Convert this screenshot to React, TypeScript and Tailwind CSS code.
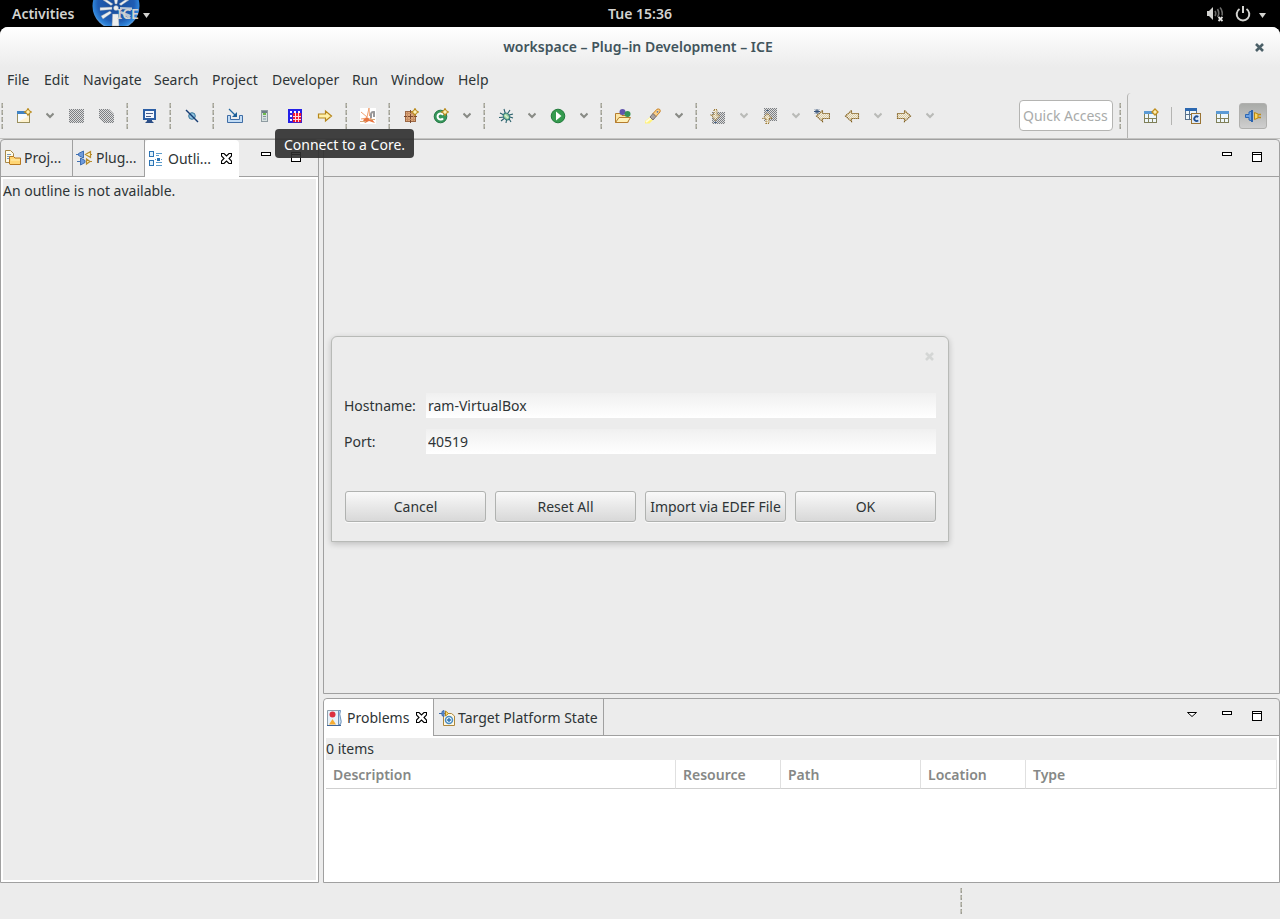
import React from 'react';

type IconProps = { children: React.ReactNode; crisp?: boolean };

function Icon({ children, crisp }: IconProps) {
    return (
        <svg className="h-4 w-4 shrink-0" viewBox="0 0 16 16" fill="none" shapeRendering={crisp ? 'crispEdges' : 'auto'}>
            {children}
        </svg>
    );
}

function Handle() {
    return (
        <svg className="h-[26px] w-[3px] shrink-0" viewBox="0 0 3 26" shapeRendering="crispEdges">
            {[0, 7, 14, 21].map((y) => (
                <g key={y}>
                    <rect x="0" y={y} width="1" height="5" fill="#c4c4bf" />
                    <rect x="1" y={y} width="1" height="5" fill="#9d9d94" />
                    <rect x="1" y={y + 1} width="1" height="2" fill="#b3b2a2" />
                </g>
            ))}
        </svg>
    );
}

function Grip() {
    return (
        <div className="flex w-[13px] shrink-0 justify-center">
            <Handle />
        </div>
    );
}

function Tool({ label, children }: { label: string; children: React.ReactNode }) {
    return (
        <button aria-label={label} className="flex h-8 w-[30px] shrink-0 items-center justify-center">
            {children}
        </button>
    );
}

function Drop({ off }: { off?: boolean }) {
    return (
        <button aria-label="More" className="flex h-8 w-[22px] shrink-0 items-center justify-center">
            <svg className="h-2 w-2" viewBox="0 0 8 8" fill="none" stroke={off ? '#b9bab7' : '#888a85'} strokeWidth="2">
                <path d="M0.5 1.5L4 5L7.5 1.5" />
            </svg>
        </button>
    );
}

function Sparkle() {
    return (
        <path
            transform="translate(12 4)"
            d="M0 -3.5L1.3 -1.3L3.5 0L1.3 1.3L0 3.5L-1.3 1.3L-3.5 0L-1.3 -1.3Z"
            fill="#fff3b8"
            stroke="#b98a1c"
            strokeWidth="1.1"
        />
    );
}

function NewIcon() {
    return (
        <Icon>
            <rect x="1.5" y="3.5" width="12" height="11" fill="#f5fbff" stroke="#9a8f5c" />
            <rect x="1" y="3" width="13" height="3" fill="#3f83c4" />
            <path d="M2 14L13 8V14Z" fill="#fff3cf" />
            <Sparkle />
        </Icon>
    );
}

function ConsoleIcon() {
    return (
        <Icon>
            <rect x="3" y="2" width="11" height="9" fill="#f4f8ff" stroke="#2c5fa5" strokeWidth="2" />
            <path d="M5 5.5h7M5 8.5h5" stroke="#4a5f8c" />
            <path d="M6 12h5v1l2 2H4l2-2z" fill="#2b4e86" />
        </Icon>
    );
}

function SkipIcon() {
    return (
        <Icon>
            <circle cx="8" cy="8" r="3.3" fill="#8fc4e0" stroke="#39769b" />
            <path d="M2 2L14 14" stroke="#163c73" strokeWidth="1.4" />
        </Icon>
    );
}

function InboxIcon() {
    return (
        <Icon>
            <path d="M0.5 7.500h3v4h9v-4h3v7h-15z" fill="#c2dcf5" stroke="#3f6da5" />
            <path d="M2 1l7 7" stroke="#2468a0" strokeWidth="1.3" />
            <path d="M10 4v5H5z" fill="#1e5f97" />
        </Icon>
    );
}

function ServerIcon() {
    return (
        <Icon crisp>
            <rect x="4" y="2" width="7" height="12" fill="#8f9ca2" />
            <rect x="5" y="3" width="5" height="10" fill="#d8e2e0" />
            <rect x="5" y="3" width="5" height="2" fill="#6d7f88" />
            <rect x="6" y="5" width="3" height="2" fill="#6dbb4c" />
            <rect x="6" y="8" width="3" height="1" fill="#84949c" />
            <rect x="6" y="10" width="3" height="2" fill="#adc0c6" />
        </Icon>
    );
}

function CoreIcon() {
    return (
        <Icon crisp>
            <rect x="1" y="1" width="14" height="14" fill="#2420e8" />
            {[2, 6, 10].map((y) =>
                [2, 6, 10].map((x) => <rect key={`${x}-${y}`} x={x + 1} y={y + 1} width="2" height="2" fill="#f4f2ff" />)
            )}
            <rect x="5" y="5" width="10" height="10" fill="#f0162c" />
            <path d="M8.500 5v9M11.500 5v9M6 8.500h8M6 11.500h8" stroke="#ffd5dd" />
            <path d="M5.500 5v10M14.500 5v10M5 14.500h10" stroke="#4a1fc4" />
        </Icon>
    );
}

function RightArrow() {
    return (
        <Icon>
            <path d="M1.5 6H8.5V3L14.5 8L8.5 13V10H1.5Z" fill="#fff0a8" stroke="#b5851a" strokeWidth="1.2" />
        </Icon>
    );
}

function LaunchIcon() {
    return (
        <Icon>
            <rect width="16" height="16" fill="#fff" />
            <path d="M1 4L7 9L9 0L9.5 8L14 3M1 11L7 10M8 10L13 14" stroke="#f0a070" />
            <path d="M3 12L7 9L9 11L11 10L15 15L9 13L5 15Z" fill="#e8743f" />
            <path d="M11 10V6Q11.500 3.500 14 4V9" stroke="#98989a" strokeWidth="2" />
            <path d="M0 13.5h6M9 11.5h6" stroke="#d8a878" />
        </Icon>
    );
}

function PackageIcon() {
    return (
        <Icon>
            <rect x="2.5" y="3.5" width="10" height="10" fill="#dca77b" stroke="#9c6845" />
            <path d="M7.500 2v13M1 8.500h13" stroke="#7b4a30" />
            <path d="M4.500 4v9M10.500 4v9M3 5.500h9M3 11.500h9" stroke="#c68d63" />
            <Sparkle />
        </Icon>
    );
}

function ClassIcon() {
    return (
        <Icon>
            <circle cx="7.500" cy="8.500" r="6.3" fill="#35975b" stroke="#237642" />
            <path d="M10 6.8A3 3 0 1 0 10 10.3" stroke="#fff" strokeWidth="2" />
            <Sparkle />
        </Icon>
    );
}

function BugIcon() {
    return (
        <Icon>
            <path
                d="M8 8L2 5M8 8L6 1M8 8L12 2M8 8L15 6M8 9L1 9.5M8 9L3 13M9 9L8 15M10 9L13 14M9 8L15 10"
                stroke="#29606c"
                strokeWidth="1.1"
            />
            <ellipse cx="8.5" cy="8.5" rx="2.8" ry="3.6" transform="rotate(-40 8.5 8.5)" fill="#9ccf9f" stroke="#317a7c" />
            <path d="M7 7l3 3" stroke="#d7f0cf" strokeWidth="1.5" />
        </Icon>
    );
}

function RunIcon() {
    return (
        <Icon>
            <circle cx="8" cy="8" r="6.8" fill="#359b4f" stroke="#217a3b" />
            <path d="M6 3.5L11.5 8L6 12.5Z" fill="#fff" />
        </Icon>
    );
}

function OpenTypeIcon() {
    return (
        <Icon>
            <path d="M0.5 14.5V5.5H5L7 7.5H13V14.5Z" fill="#fbe5a5" stroke="#b57c2d" />
            <circle cx="7.5" cy="4" r="3" fill="#6155ad" />
            <circle cx="12.5" cy="6" r="3" fill="#369356" />
            <path d="M0.5 14.5L4 9.5H15.5L12.5 14.5Z" fill="#fff0b6" stroke="#b57c2d" />
        </Icon>
    );
}

function SearchIcon() {
    return (
        <Icon>
            <path d="M0 13L5 9L8 12L4.5 15.5H0Z" fill="#fff27e" />
            <path d="M1 14L6 10" stroke="#fffce0" strokeWidth="2" />
            <path d="M8 5.5L12 1.2Q16 0.2 15 4L10.5 9Z" fill="#fbd08a" stroke="#c98122" />
            <path d="M5 9L8 5.500L11 8.5L8 12Z" fill="#a8a1a1" stroke="#777073" />
            <circle cx="12.5" cy="3.8" r="0.9" fill="#5873a8" />
        </Icon>
    );
}

function NextNote() {
    return (
        <Icon>
            <path d="M2 4H15V16H2Z" fill="url(#dither)" />
            <path d="M4 1.5H7V7H10L5.5 12L1 7H4Z" fill="url(#ditherGold)" stroke="#9a7838" strokeDasharray="1 1" strokeWidth="1.2" />
            <path d="M4 14.5h3" stroke="#4a6484" />
        </Icon>
    );
}

function PrevNote() {
    return (
        <Icon>
            <path d="M2 0H15V13H2Z" fill="url(#dither)" />
            <path d="M4 15.5H7V10.5H10L5.5 5.5L1 10.5H4Z" fill="url(#ditherGold)" stroke="#9a7838" strokeDasharray="1 1" strokeWidth="1.2" />
            <path d="M4 2.5h3" stroke="#4a6484" />
        </Icon>
    );
}

function GhostArrow({ flip, star }: { flip?: boolean; star?: boolean }) {
    return (
        <Icon>
            <g transform={flip ? 'translate(16 0) scale(-1 1)' : star ? 'translate(1 0)' : undefined}>
                <path d="M14.5 5.5H7.5V2.5L1.5 8L7.5 13.5V10.5H14.5Z" fill="url(#ditherGold)" stroke="#c9b489" />
                <path
                    d="M14.5 5.5H7.5V2.5L1.5 8L7.5 13.5V10.5H14.5Z"
                    stroke="#7d5c20"
                    strokeDasharray="1 1"
                    strokeWidth="1.2"
                />
            </g>
            {star && <path d="M0 3.5h6M3 1v5M1 1.5l4 4M5 1.5l-4 4" stroke="#39557a" />}
        </Icon>
    );
}

function PerspectiveIcon({ add, java }: { add?: boolean; java?: boolean }) {
    return (
        <Icon>
            {java ? (
                <>
                    <rect x="0.5" y="0.5" width="11" height="11" fill="#eef7fb" stroke="#58718c" />
                    <rect x="0" y="0" width="12" height="3" fill="#2c68b0" />
                    <path d="M4.5 3v9M1 6.5h6" stroke="#58718c" />
                    <rect x="6.5" y="5.5" width="9" height="10" fill="#dfeaf8" stroke="#9a7434" />
                    <path d="M13.2 9A2.300 2.300 0 1 0 13.2 12.3" stroke="#1f4f91" strokeWidth="1.8" />
                </>
            ) : (
                <>
                    <rect x="1.5" y="3.5" width="12" height="11" fill="#eef7fb" stroke="#7f7f58" />
                    <rect x="1" y="3" width="13" height="3" fill="#5b9ad4" />
                    <path d="M5.5 6v9M2 10.5h11.5M9.5 10.5v4" stroke="#84825a" />
                </>
            )}
            {add && <path d="M12 1L15 4L12 7L9 4Z" fill="#fff1b3" stroke="#bf8e1d" strokeWidth="1.3" />}
        </Icon>
    );
}

function PluginIcon() {
    return (
        <Icon>
            <path d="M0.5 6.5H4V4L7 3V13L4 12V9.5H0.5Z" fill="#6ea2e2" stroke="#2d67b3" />
            <rect x="6" y="2" width="2" height="12" fill="#2b63ae" />
            <path d="M9.5 4.5L13 6V10L9.5 11.5Z" fill="#ffd65a" stroke="#b58718" />
            <path d="M13 6.5h3M13 9.5h3" stroke="#c08a12" strokeWidth="1.3" />
        </Icon>
    );
}

function ProjectIcon() {
    return (
        <Icon>
            <path d="M0.5 0.5H5.5L8.5 3.5V12.5H0.5Z" fill="#fffbe8" stroke="#a78848" />
            <path d="M2 4.5h4M2 6.5h3M2 8.5h3" stroke="#7b9cc0" />
            <path d="M4.5 14V6.5H8.5L10 8H15.5V14.5H5Z" fill="#ffd675" stroke="#b9791f" />
            <path d="M6 10h9" stroke="#fff0b5" />
        </Icon>
    );
}

function PluginsIcon() {
    return (
        <Icon>
            <path d="M0 4.5h3M7.500 1v7L2.500 5.500v-2z" fill="#6f9bdc" stroke="#3f6fb2" />
            <path d="M14.500 1.500v6L9.500 4.500ZM14 4.500h2" fill="#fff3c4" stroke="#b88c2c" strokeWidth="1.2" />
            <path d="M1 11.500h3M4.500 8v7L9 12.500v-2z" fill="#6f9bdc" stroke="#3f6fb2" />
            <path d="M10.500 9v5L14 11.500ZM14 11.500h2" fill="#fff3c4" stroke="#b88c2c" strokeWidth="1.2" />
        </Icon>
    );
}

function OutlineIcon() {
    return (
        <Icon crisp>
            <rect x="1.5" y="0.5" width="4" height="5" fill="#e1f1fb" stroke="#2c74b5" />
            <rect x="1.5" y="9.5" width="4" height="5" fill="#e1f1fb" stroke="#2c74b5" />
            <path d="M8 2.5h6M8 4.5h3M8 11.5h6M8 14.5h6" stroke="#5c9ccb" />
            <path d="M7 8.5h1M13 8.5h1" stroke="#5c9ccb" />
            <rect x="9" y="7" width="3" height="3" fill="#2c74b5" />
        </Icon>
    );
}

function ProblemsIcon() {
    return (
        <Icon>
            <path d="M0.5 0.5H11.5V15.5H0.5Z" fill="#e7f1fa" stroke="#8ea0ad" />
            <path d="M11.5 0.500H13.500Q12 4 13.500 8T13.500 14.500H11.500Z" fill="#cddff0" stroke="#6d93bd" />
            <circle cx="5.5" cy="4.500" r="3" fill="#dc2f3f" />
            <path d="M2 14.5L5.5 9L9 14.5Z" fill="#f6ac32" />
            <path d="M0 15.5h14" stroke="#3d6499" />
        </Icon>
    );
}

function TargetIcon() {
    return (
        <Icon>
            <path d="M4.5 3.5H12.5L15.5 6V15.5H4.5Z" fill="#fff8e2" stroke="#ad873c" />
            <path d="M0 3.5h3M3 1.5l2-1v6l-2-1z" fill="#6b9adc" stroke="#3968aa" />
            <path d="M6.500 1l3 2.500l-3 2.500z" fill="#ffe27a" stroke="#b58718" />
            <circle cx="10" cy="10" r="3.5" fill="#eef7ff" stroke="#4a8cc0" strokeWidth="1.5" />
            <path d="M10 8v4M8 10h4" stroke="#2f74ae" strokeWidth="1.4" />
        </Icon>
    );
}

function TabClose() {
    return (
        <svg className="h-[11px] w-[11px]" viewBox="0 0 11 11" fill="#fff" stroke="#000" strokeWidth="1.1">
            <path d="M0.5 0.5H3L5.5 3L8 0.5H10.5V3L8 5.5L10.5 8V10.5H8L5.5 8L3 10.5H0.5V8L3 5.5L0.5 3Z" />
        </svg>
    );
}

function CloseMark() {
    return (
        <svg className="h-[9px] w-[9px]" viewBox="0 0 9 9" fill="none" stroke="currentColor" strokeWidth="2.6">
            <path d="M1 1L8 8M8 1L1 8" />
        </svg>
    );
}

function PaneButtons({ menu }: { menu?: boolean }) {
    return (
        <div className="ml-auto flex items-start pt-[11px] pr-[17px]">
            {menu && (
                <button aria-label="View menu" className="mr-[25px] h-3 w-[10px]">
                    <svg className="h-3 w-[10px]" viewBox="0 0 10 12" fill="#fff" stroke="#000">
                        <path d="M0.5 2.5H9.5L5 6.5Z" />
                    </svg>
                </button>
            )}
            <button aria-label="Minimize" className="mr-5 h-3 w-[10px]">
                <svg className="h-3 w-[10px]" viewBox="0 0 10 12" fill="#fff" stroke="#000" shapeRendering="crispEdges">
                    <rect x="0.5" y="1.5" width="9" height="3" />
                </svg>
            </button>
            <button aria-label="Maximize" className="h-3 w-[10px]">
                <svg className="h-3 w-[10px]" viewBox="0 0 10 12" fill="#fff" stroke="#000" shapeRendering="crispEdges">
                    <path d="M0.5 1.5H9.5V10.5H0.5ZM0 3.5H10" />
                </svg>
            </button>
        </div>
    );
}

function TopBar() {
    return (
        <header className="grid h-[27px] grid-cols-3 items-center bg-black font-semibold text-[#d3d3d0]">
            <div className="flex h-full items-center pl-3">
                <button className="w-20 text-left">Activities</button>
                <button className="flex h-full items-center">
                    <svg className="h-[27px] w-12" viewBox="0 0 48 27">
                        <defs>
                            <radialGradient id="orb" cx="0.5" cy="0.45" r="0.55">
                                <stop offset="0" stopColor="#174a96" />
                                <stop offset="0.7" stopColor="#1f5db4" />
                                <stop offset="0.9" stopColor="#2f86dc" />
                                <stop offset="1" stopColor="#7fa8d8" />
                            </radialGradient>
                        </defs>
                        <circle cx="24" cy="6" r="23.5" fill="url(#orb)" />
                        <rect y="26" width="48" height="1" fill="#000" />
                        <g fill="#eceeee" stroke="#7e8ea3" strokeWidth="0.4">
                            <path d="M20.500 14H26.500L27 26H20Z" />
                            <circle cx="24" cy="8" r="2.5" />
                            <path d="M8 7.500L20 7V9.500L8 10.500Z" />
                            <path d="M9 16L18 11L19.500 13L11 19Z" />
                            <path d="M11 0L15 0L21 4L19 5.500Z" />
                            <path d="M37 0L33 0L27 4L29 5.500Z" />
                            <path d="M22 -1H26L25 4H23Z" />
                        </g>
                        <g fill="#b9c5d3">
                            <path d="M40 7.500L28 7V9L40 10Z" />
                            <path d="M39 15L29 11L28 13L37 18Z" />
                        </g>
                    </svg>
                    <span className="-ml-[23px]">ICE</span>
                    <svg className="mt-1 ml-1 h-[5px] w-[7px]" viewBox="0 0 7 5" fill="#d3d3d0">
                        <path d="M0 0H7L3.5 5Z" />
                    </svg>
                </button>
            </div>
            <time className="text-center">Tue 15:36</time>
            <div className="flex items-center justify-end gap-3 pr-[14px]">
                <svg className="h-4 w-4" viewBox="0 0 16 16" fill="none">
                    <path d="M0 5h2l4-4v13l-4-4H0z" fill="#d3d3d0" />
                    <path d="M8 5q1.5 2.5 0 5M10.500 3q2.500 4.5 0 8M13 1.5q3 3 2 8" stroke="#6b6b69" strokeWidth="1.6" />
                    <path d="M11.500 11l4 4M15.500 11l-4 4" stroke="#e6e6e4" strokeWidth="1.8" />
                </svg>
                <svg className="h-4 w-4" viewBox="0 0 16 16" fill="none" stroke="#d3d3d0" strokeWidth="2">
                    <path d="M4.500 3A6.300 6.300 0 1 0 11.500 3M8 0V7" />
                </svg>
                <svg className="mt-1 -ml-1 h-[5px] w-[7px]" viewBox="0 0 7 5" fill="#d3d3d0">
                    <path d="M0 0H7L3.5 5Z" />
                </svg>
            </div>
        </header>
    );
}

const menus = [
    { name: 'File', width: 'w-[37px]' },
    { name: 'Edit', width: 'w-[39px]' },
    { name: 'Navigate', width: 'w-[71px]' },
    { name: 'Search', width: 'w-[58px]' },
    { name: 'Project', width: 'w-[60px]' },
    { name: 'Developer', width: 'w-[80px]' },
    { name: 'Run', width: 'w-[39px]' },
    { name: 'Window', width: 'w-[67px]' },
    { name: 'Help', width: 'w-[40px]' },
];

function Toolbar() {
    return (
        <div className="flex h-[46px] items-center border-b border-[#c4c4c2]">
            <div className="flex w-[9px] shrink-0 pl-px">
                <Handle />
            </div>
            <Tool label="New"><NewIcon /></Tool>
            <Drop />
            <Tool label="Save">
                <Icon><path d="M1 1H16V15H1Z" fill="url(#dither)" /></Icon>
            </Tool>
            <Tool label="Save All">
                <Icon><path d="M1 1H11L16 6V15H6L1 10Z" fill="url(#dither)" /></Icon>
            </Tool>
            <Grip />
            <Tool label="Open Console"><ConsoleIcon /></Tool>
            <Grip />
            <Tool label="Skip All Breakpoints"><SkipIcon /></Tool>
            <Grip />
            <Tool label="Import"><InboxIcon /></Tool>
            <Tool label="Server"><ServerIcon /></Tool>
            <div className="relative">
                <Tool label="Connect to a Core"><CoreIcon /></Tool>
                <div role="tooltip" className="absolute top-[29px] -left-[5px] z-10 h-[29px] w-[139px] rounded bg-[#2d2d2d]/90 text-center leading-[31px] whitespace-nowrap text-white">
                    Connect to a Core.
                </div>
            </div>
            <Tool label="Go"><RightArrow /></Tool>
            <Grip />
            <Tool label="Launch"><LaunchIcon /></Tool>
            <Grip />
            <Tool label="New Package"><PackageIcon /></Tool>
            <Tool label="New Class"><ClassIcon /></Tool>
            <Drop />
            <Grip />
            <Tool label="Debug"><BugIcon /></Tool>
            <Drop />
            <Tool label="Run"><RunIcon /></Tool>
            <Drop />
            <Grip />
            <Tool label="Open Type"><OpenTypeIcon /></Tool>
            <Tool label="Search"><SearchIcon /></Tool>
            <Drop />
            <Grip />
            <Tool label="Next Annotation"><NextNote /></Tool>
            <Drop off />
            <Tool label="Previous Annotation"><PrevNote /></Tool>
            <Drop off />
            <Tool label="Last Edit Location"><GhostArrow star /></Tool>
            <Tool label="Back"><GhostArrow /></Tool>
            <Drop off />
            <Tool label="Forward"><GhostArrow flip /></Tool>
            <Drop off />
            <div className="ml-auto flex shrink-0 items-center self-stretch">
                <input
                    aria-label="Quick Access"
                    placeholder="Quick Access"
                    className="h-[31px] w-[94px] rounded border border-[#b4b4b2] bg-white px-[3px] placeholder:text-[#a9abaa]"
                />
                <div className="w-px" />
                <Grip />
                <div className="flex items-center self-stretch rounded-tl border-l border-[#b4b4b2] pr-[13px] pl-2">
                    <Tool label="Open Perspective"><PerspectiveIcon add /></Tool>
                    <div className="mr-[6px] ml-[5px] h-[18px] w-px bg-[#b4b4b2]" />
                    <Tool label="Java"><PerspectiveIcon java /></Tool>
                    <Tool label="Resource"><PerspectiveIcon /></Tool>
                    <button
                        aria-label="Plug-in Development"
                        className="ml-px flex h-[26px] w-7 items-center justify-center rounded-[3px] border border-[#b0b0ae] bg-linear-to-b from-[#a9aba8] to-[#cfcfcf]"
                    >
                        <PluginIcon />
                    </button>
                </div>
            </div>
        </div>
    );
}

function OutlinePane() {
    return (
        <section className="flex w-[319px] shrink-0 flex-col rounded-t border border-[#a0a0a0]">
            <div className="flex h-[37px] border-b border-[#a0a0a0]">
                <button className="flex w-[72px] items-center gap-[3px] border-r border-[#a0a0a0] pl-1">
                    <ProjectIcon />
                    Proj...
                </button>
                <button className="flex w-[72px] items-center gap-1 border-r border-[#a0a0a0] pl-[3px]">
                    <PluginsIcon />
                    Plug...
                </button>
                <div className="-mb-px flex w-[94px] items-center rounded-t bg-white pl-[3px]">
                    <OutlineIcon />
                    <span className="ml-1 w-[53px]">Outli...</span>
                    <button aria-label="Close Outline"><TabClose /></button>
                </div>
                <PaneButtons />
            </div>
            <div className="flex-1 border-2 border-white leading-[23px]">An outline is not available.</div>
        </section>
    );
}

const columns = [
    { name: 'Description', width: 'w-[350px]' },
    { name: 'Resource', width: 'w-[105px]' },
    { name: 'Path', width: 'w-[140px]' },
    { name: 'Location', width: 'w-[105px]' },
    { name: 'Type', width: 'w-auto' },
];

function ProblemsPane() {
    return (
        <section className="flex h-[185px] flex-col rounded-t border border-[#a0a0a0]">
            <div className="flex h-[37px] border-b border-[#a0a0a0]">
                <div className="-mb-px flex w-[110px] items-center rounded-tl border-r border-[#a0a0a0] bg-white pl-[3px]">
                    <ProblemsIcon />
                    <span className="ml-1 w-[69px]">Problems</span>
                    <button aria-label="Close Problems"><TabClose /></button>
                </div>
                <button className="flex w-[170px] items-center gap-[3px] border-r border-[#a0a0a0] pt-px pl-[5px] whitespace-nowrap">
                    <TargetIcon />
                    Target Platform State
                </button>
                <PaneButtons menu />
            </div>
            <div className="flex-1 border-2 border-white bg-white">
                <div className="h-[22px] bg-[#ececec] leading-[22px]">0 items</div>
                <table className="w-full table-fixed border-separate border-spacing-0">
                    <thead>
                        <tr>
                            {columns.map((col) => (
                                <th
                                    key={col.name}
                                    className={`${col.width} h-[29px] border-r border-b border-r-[#e0e0e0] border-b-[#cfcfcf] pt-[2px] pl-[7px] text-left font-semibold text-[#868886]`}
                                >
                                    {col.name}
                                </th>
                            ))}
                        </tr>
                    </thead>
                    <tbody />
                </table>
            </div>
        </section>
    );
}

const actions = ['Cancel', 'Reset All', 'Import via EDEF File', 'OK'];

function ConnectDialog() {
    return (
        <div
            role="dialog"
            aria-label="Connect"
            className="absolute top-[336px] left-1/2 w-[618px] -translate-x-1/2 rounded-t-md border border-[#b8bab7] bg-[#ececec] px-3 pb-[19px] shadow-[0_2px_6px_rgba(0,0,0,0.2)]"
        >
            <div className="flex h-14 justify-end pt-[15px]">
                <button aria-label="Close dialog" className="mr-[2px] h-[9px] text-[#d4d6d5]"><CloseMark /></button>
            </div>
            <div className="grid grid-cols-[82px_1fr] items-center gap-y-[11px]">
                <label htmlFor="hostname">Hostname:</label>
                <input id="hostname" defaultValue="ram-VirtualBox" className="h-[25px] bg-linear-to-b from-[#f0f0f0] to-white px-[2px]" />
                <label htmlFor="port">Port:</label>
                <input id="port" defaultValue="40519" className="h-[25px] bg-linear-to-b from-[#f0f0f0] to-white px-[2px]" />
            </div>
            <div className="mt-[37px] grid grid-cols-4 gap-[9px] pl-px">
                {actions.map((action) => (
                    <button
                        key={action}
                        className="h-[31px] rounded-[3px] border border-[#b0b2b0] bg-linear-to-b from-[#f9f9f9] to-[#d8d8d8] whitespace-nowrap shadow-[0_1px_0_#fafafa]"
                    >
                        {action}
                    </button>
                ))}
            </div>
        </div>
    );
}

export default function App() {
    return (
        <div className="relative flex min-h-screen flex-col bg-black font-['Noto_Sans',sans-serif] text-[14px] leading-5 text-[#2e3436]">
            <svg className="absolute h-0 w-0" aria-hidden="true">
                <defs>
                    <pattern id="dither" width="2" height="2" patternUnits="userSpaceOnUse">
                        <rect width="2" height="2" fill="#dcdcdc" />
                        <rect width="1" height="1" fill="#7c7f83" />
                        <rect x="1" y="1" width="1" height="1" fill="#7c7f83" />
                    </pattern>
                    <pattern id="ditherGold" width="2" height="2" patternUnits="userSpaceOnUse">
                        <rect width="2" height="2" fill="#ececec" />
                        <rect width="1" height="1" fill="#e2cf9a" />
                        <rect x="1" y="1" width="1" height="1" fill="#e2cf9a" />
                    </pattern>
                </defs>
            </svg>
            <TopBar />
            <div className="flex flex-1 flex-col rounded-t-lg bg-[#ececec]">
                <div className="grid h-10 grid-cols-[1fr_auto_1fr] items-center rounded-t-lg bg-linear-to-b from-white to-[#ececec] pr-4 pl-3">
                    <h1 className="col-start-2 font-semibold text-[#41545c]">workspace – Plug–in Development – ICE</h1>
                    <button aria-label="Close window" className="justify-self-end text-[#4c6068]"><CloseMark /></button>
                </div>
                <nav className="flex h-[26px] items-center pl-[7px]">
                    {menus.map((menu) => (
                        <button key={menu.name} className={`${menu.width} text-left`}>{menu.name}</button>
                    ))}
                </nav>
                <Toolbar />
                <main className="flex flex-1 gap-1">
                    <OutlinePane />
                    <div className="flex min-w-0 flex-1 flex-col gap-1">
                        <section className="flex flex-1 flex-col rounded-t border border-[#a0a0a0]">
                            <div className="flex h-[37px] border-b border-[#a0a0a0]">
                                <PaneButtons />
                            </div>
                        </section>
                        <ProblemsPane />
                    </div>
                </main>
                <footer className="flex h-9 items-center pl-[75%]">
                    <Handle />
                </footer>
            </div>
            <ConnectDialog />
        </div>
    );
}
